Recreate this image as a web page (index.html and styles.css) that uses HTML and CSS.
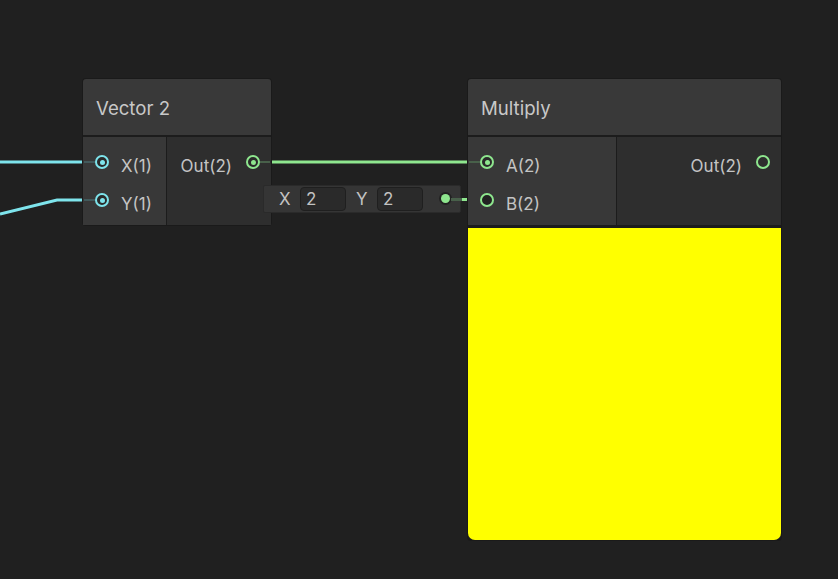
FILE: index.html
```html
<!DOCTYPE html>
<html>
<head>
<meta charset="utf-8">
<link rel="stylesheet" href="styles.css">
</head>
<body>
<div class="canvas">
  <svg class="wires" width="838" height="579" viewBox="0 0 838 579">
    <line x1="0" y1="162" x2="84" y2="162" class="w-cyan"/>
    <polyline points="0,214 57,200 84,200" class="w-cyan" fill="none"/>
    <line x1="272" y1="162" x2="467" y2="162" class="w-green"/>
  </svg>

  <div class="node vec2">
    <div class="node-title">Vector 2</div>
    <div class="node-body">
      <div class="col inputs">
        <div class="port-row in"><span class="port cyan linked"></span><span class="lbl">X(1)</span></div>
        <div class="port-row in"><span class="port cyan linked"></span><span class="lbl">Y(1)</span></div>
      </div>
      <div class="col outputs">
        <div class="port-row out"><span class="lbl">Out(2)</span><span class="port green linked"></span></div>
      </div>
    </div>
  </div>

  <div class="inline-value">
    <span class="iv-lbl">X</span><span class="iv-field">2</span>
    <span class="iv-lbl">Y</span><span class="iv-field">2</span>
    <span class="iv-dot"></span>
    <span class="iv-wire"></span>
  </div>

  <div class="node mult">
    <div class="node-title">Multiply</div>
    <div class="node-body">
      <div class="col inputs">
        <div class="port-row in"><span class="port green linked"></span><span class="lbl">A(2)</span></div>
        <div class="port-row in"><span class="port green open"></span><span class="lbl">B(2)</span></div>
      </div>
      <div class="col outputs">
        <div class="port-row out"><span class="lbl">Out(2)</span><span class="port green hollow"></span></div>
      </div>
    </div>
    <div class="preview"></div>
  </div>
</div>
</body>
</html>
```

FILE: styles.css
```css
html, body {
  margin: 0;
  padding: 0;
  background: #202020;
}
.canvas {
  position: relative;
  width: 838px;
  height: 579px;
  overflow: hidden;
  background: #202020;
  font-family: Inter, "Noto Sans", sans-serif;
  color: #c4c4c4;
}
.wires {
  position: absolute;
  left: 0;
  top: 0;
}
.w-cyan {
  stroke: #7ee4ec;
  stroke-width: 3;
}
.w-green {
  stroke: #8ee68e;
  stroke-width: 3;
}
.node {
  position: absolute;
  top: 79px;
  background: #1c1c1c;
  border-radius: 3px;
  box-shadow: 0 0 0 1px #1a1a1a;
  display: flex;
  flex-direction: column;
  gap: 2px;
}
.vec2 {
  left: 83px;
  width: 188px;
}
.mult {
  left: 468px;
  width: 313px;
}
.node-title {
  height: 56px;
  background: #393939;
  border-radius: 3px 3px 0 0;
  display: flex;
  align-items: center;
  padding-left: 13px;
  padding-top: 1px;
  font-size: 18.6px;
  color: #c8c8c8;
  box-sizing: border-box;
}
.node-body {
  display: flex;
  gap: 1px;
  height: 88px;
}
.col {
  display: flex;
  flex-direction: column;
  padding-top: 6px;
  box-sizing: border-box;
}
.inputs {
  background: #383838;
}
.outputs {
  background: #2e2e2e;
  flex: 1;
}
.vec2 .inputs { width: 83px; }
.mult .inputs { width: 148px; }
.port-row {
  height: 38px;
  display: flex;
  align-items: center;
  font-size: 17px;
  color: #c4c4c4;
  position: relative;
}
.lbl {
  margin-top: 8px;
}
.port-row.in {
  padding-left: 12px;
  gap: 12px;
}
.port-row.out {
  justify-content: flex-end;
  padding-right: 11px;
  gap: 14px;
}
.port {
  width: 14px;
  height: 14px;
  box-sizing: border-box;
  border-radius: 50%;
  border: 2px solid;
  background: #2a2a2a;
  position: relative;
  flex: none;
}
.port.cyan { border-color: #7ee4ec; }
.port.green { border-color: #8ee68e; }
.port.linked::after {
  content: "";
  position: absolute;
  left: 2.5px;
  top: 2.5px;
  width: 5px;
  height: 5px;
  border-radius: 50%;
}
.port.cyan.linked::after { background: #7ee4ec; }
.port.green.linked::after { background: #8ee68e; }
.port.hollow { background: transparent; }
.port.open { background: #222; }
.port-row.in .port::before {
  content: "";
  position: absolute;
  right: 12px;
  top: 4px;
  width: 11px;
  height: 2px;
}
.port-row.out .port::before {
  content: "";
  position: absolute;
  left: 12px;
  top: 4px;
  width: 10px;
  height: 2px;
}
.port.cyan::before { background: #42595b; }
.port.green.linked::before { background: #48604a; }
.port.open::before, .port.hollow::before { display: none; }
.preview {
  height: 312px;
  margin-top: 1px;
  background: #ffff00;
  border-radius: 0 0 7px 7px;
}
.inline-value {
  position: absolute;
  left: 263px;
  top: 185px;
  width: 198px;
  height: 28px;
  box-sizing: border-box;
  background: #353535;
  border: 1px solid #2a2a2a;
  border-radius: 2px;
  display: flex;
  align-items: center;
  padding-left: 15px;
  font-size: 17px;
  color: #c2c2c2;
}
.iv-lbl {
  width: 21px;
}
.iv-field {
  width: 46px;
  height: 24px;
  box-sizing: border-box;
  background: #2a2a2a;
  border: 1px solid #1f1f1f;
  border-radius: 4px;
  padding-left: 5px;
  line-height: 22px;
  margin-right: 10px;
}
.iv-dot {
  position: absolute;
  left: 177px;
  top: 8px;
  width: 9px;
  height: 9px;
  border-radius: 50%;
  background: #8ee68e;
  box-shadow: 0 0 0 2px #222;
}
.iv-wire {
  position: absolute;
  left: 187px;
  top: 12px;
  width: 31px;
  height: 3px;
  background: linear-gradient(90deg, #48604a 0 11px, #8ee68e 11px);
}
```
